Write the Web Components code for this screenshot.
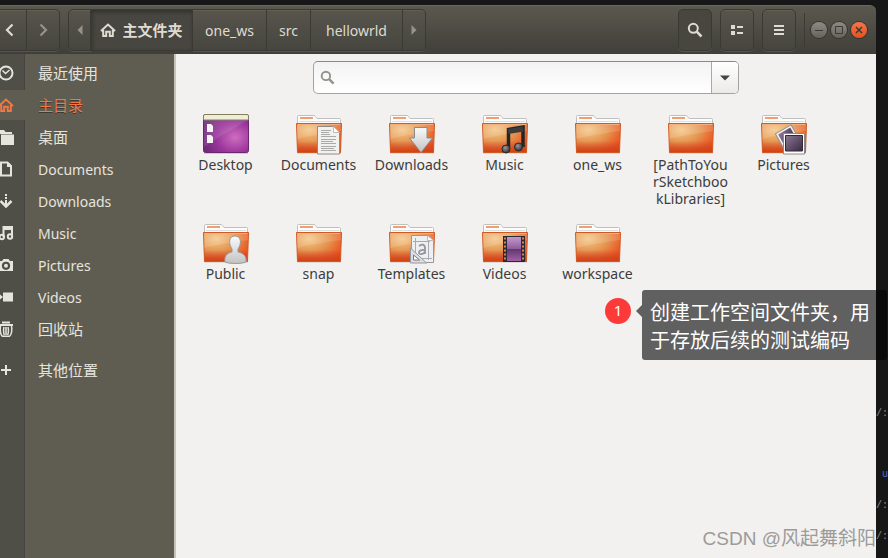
<!DOCTYPE html>
<html lang="zh-CN">
<head>
<meta charset="utf-8">
<title>主文件夹</title>
<style>
body{margin:0;font:14px/17px "Noto Sans","Noto Sans CJK SC",sans-serif}
</style>
</head>
<body>
<desk-top></desk-top>
<script>
const define = (name, html) => {
  const t = document.createElement('template');
  t.innerHTML = html;
  customElements.define(name, class extends HTMLElement {
    constructor() {
      super();
      this.attachShadow({mode: 'open'}).append(t.content.cloneNode(true));
    }
  });
};

/* Symbolic 16px icons */
const GLYPHS = {
  back: '<path d="M10.5 2.5 5 8l5.500 5.500" fill="none" stroke="currentColor" stroke-width="2.200"/>',
  next: '<path d="M5.500 2.500 11 8l-5.500 5.500" fill="none" stroke="currentColor" stroke-width="2.200"/>',
  left: '<path d="M10.500 3v10L5.500 8z" fill="currentColor"/>',
  right: '<path d="M5.500 3v10l5-5z" fill="currentColor"/>',
  home: '<path d="M1 9 8 2.500 15 9M3.200 8v6h3V9.700h3.600V14h3V8" fill="none" stroke="currentColor" stroke-width="2"/>',
  search: '<circle cx="6.300" cy="6.300" r="4.500" fill="none" stroke="currentColor" stroke-width="2"/><path d="m9.700 9.700 4.800 4.800" stroke="currentColor" stroke-width="2.500"/>',
  list: '<path d="M2 3h4v4H2zM2 9h4v4H2zM8 4h6v2H8zM8 10h6v2H8z" fill="currentColor"/>',
  menu: '<path d="M3 3h10v2H3zM3 7h10v2H3zM3 11h10v2H3z" fill="currentColor"/>',
  clock: '<circle cx="8" cy="8" r="6.500" fill="none" stroke="currentColor" stroke-width="2"/><path d="m4.500 5.500 3 3 4-3.500" fill="none" stroke="currentColor" stroke-width="1.500"/>',
  folder: '<path d="M0 1h6l1.500 2H14v2H0z" fill="currentColor"/><path d="M3 5.500h13V16H3z" fill="currentColor"/>',
  doc: '<path d="M3 1.500h6.500L13 5v9.500H3z" fill="none" stroke="currentColor" stroke-width="2"/><path d="M9 1v5h5z" fill="currentColor"/>',
  download: '<path d="M7 1h2v2H7zM7 4h2v2H7zM7 7h2v6H7z" fill="currentColor"/><path d="M2.500 8 8 13.500 13.500 8" fill="none" stroke="currentColor" stroke-width="2.500"/>',
  music: '<path d="M5.500 12V2h8.500v9" fill="none" stroke="currentColor" stroke-width="2"/><path d="M5.500 4H14" stroke="currentColor" stroke-width="2"/><circle cx="3.800" cy="12" r="2.200" fill="none" stroke="currentColor" stroke-width="2"/><circle cx="12" cy="11.500" r="2.200" fill="none" stroke="currentColor" stroke-width="2"/>',
  camera: '<path fill-rule="evenodd" d="M1 4h3l1.500-2h5L12 4h3v10H1zm7 .700a4.100 4.100 0 1 0 0 8.200 4.100 4.100 0 0 0 0-8.200" fill="currentColor"/><circle cx="8" cy="8.800" r="2" fill="currentColor"/>',
  video: '<path d="M5 3.500h10v9H5zM0 4l5 4-5 4z" fill="currentColor"/>',
  trash: '<path d="M4 1.500h8M1 4h14" fill="none" stroke="currentColor" stroke-width="2"/><path d="M2.500 5c-.800 5 .300 9.500 2 10.200h7c1.700-.700 2.800-5.200 2-10.200M6 6c-.700 3-.400 6 .300 8M8 6v8M10 6c.700 3 .400 6-.300 8" fill="none" stroke="currentColor" stroke-width="1.500"/>',
  plus: '<path d="M8 3v10M3 8h10" stroke="currentColor" stroke-width="2"/>'
};
customElements.define('sym-icon', class extends HTMLElement {
  constructor() { super(); this.attachShadow({mode: 'open'}); }
  connectedCallback() {
    this.shadowRoot.innerHTML = `<style>:host{display:block;width:16px;height:16px;flex:none}svg{display:block;width:100%;height:100%}</style>
    <svg viewBox="0 0 16 16" aria-hidden="true">${GLYPHS[this.getAttribute('name')]}</svg>`;
  }
});

/* Full-colour 48x42 file icons: a folder with an emblem over it */
const DEFS = `<defs>
<radialGradient id="o" cx=".28" cy=".22" r=".95"><stop offset="0" stop-color="#f4c88a"/><stop offset=".45" stop-color="#e59650"/><stop offset=".85" stop-color="#ea5420"/><stop offset="1" stop-color="#e24a1a"/></radialGradient>
<linearGradient id="ol" x2="0" y2="1"><stop offset=".6" stop-color="#c43" stop-opacity="0"/><stop offset="1" stop-color="#d2420f"/></linearGradient>
<linearGradient id="g" x2="0" y2="1"><stop stop-color="#fbfbfb"/><stop offset="1" stop-color="#c2c2c2"/></linearGradient>
<linearGradient id="p" x2="1" y2="1"><stop stop-color="#8e7896"/><stop offset="1" stop-color="#382a40"/></linearGradient>
<radialGradient id="d" cx=".7" cy=".6" r=".75"><stop stop-color="#cf6dbe"/><stop offset=".55" stop-color="#9a359c"/><stop offset="1" stop-color="#6b2a77"/></radialGradient>
<linearGradient id="v" x2="0" y2="1"><stop stop-color="#c09acb"/><stop offset=".5" stop-color="#8e5c9c"/><stop offset=".52" stop-color="#63386f"/><stop offset="1" stop-color="#a25fa8"/></linearGradient>
<radialGradient id="n" cx=".4" cy=".35" r=".6"><stop stop-color="#999"/><stop offset="1" stop-color="#3a3a3a"/></radialGradient></defs>`;
const FOLDER = `<path d="M2 39.500h44v1H2z" fill="#c9c5c2"/>
<path d="M2.500 11V3.500q0-1 1-1h15.500q1 0 1.500 1l1.500 2h22.500q1 0 1 1V11z" fill="#fcfcfc" stroke="#bfc0c0"/>
<path d="M5 4h13v2H5z" fill="#f0a070"/><path d="M4 8.500h40" stroke="#dedede"/>
<path d="M1.500 10.500h45l-1 29h-43z" fill="url(#o)"/><path d="M1.500 10.500h45l-1 29h-43z" fill="url(#ol)" stroke="#cf5a24"/>
<path d="M2.500 11.500h43" stroke="#f3b180"/><path d="M2 12h44v6Q22 21 2 26z" fill="#fff" opacity=".14"/>`;
const EMBLEMS = {
  folder: '',
  documents: `<path d="M22.500 13.500h16l6 6v21.500h-22z" fill="#f1f1f0" stroke="#8c8c8c"/><path d="M38.500 13.500v6h6z" fill="#fff" stroke="#bbb"/>
    <path d="M26 17.500h10M26 19.500h8M26 21.500h9M26 23.500h15M26 26.500h15M26 28.500h12M26 30.500h15M26 33.500h15M26 35.500h13M26 37.500h15" stroke="#aaa"/>`,
  downloads: '<path d="M26.500 14.500h12.500v10.500h5.500L33 39.500 21.500 25h5z" fill="url(#g)" stroke="#8b8b8b"/>',
  music: `<path d="M27.500 35V16.500l14.500-2.500V34" fill="none" stroke="#252525" stroke-width="3.500"/><path d="M27 18.500 42 16" stroke="#3c3c3c" stroke-width="5"/>
    <circle cx="25" cy="36" r="4" fill="url(#n)" stroke="#2a2a2a"/><circle cx="37.500" cy="34" r="4" fill="url(#n)" stroke="#2a2a2a"/>`,
  pictures: `<g transform="rotate(-30 27 24)"><path d="M18.500 15.500h18v18h-18z" fill="#f6f6f6" stroke="#909090"/><path d="M20.500 17.500h14v13h-14z" fill="url(#p)"/></g>
    <path d="M23.500 20.500h21v20.500h-21z" fill="#fff" stroke="#8a8a8a"/><path d="M25.500 22.500h17v15.500h-17z" fill="url(#p)" stroke="#332838"/>`,
  public: `<path d="M23 40c-1-6 2-9 7-10v-3c-4-6-3-13 3-13s7 7 3 13v3c5 1 9 4 8 10-4 2-17 2-21 0z" fill="url(#g)" stroke="#999"/>`,
  templates: `<path d="M23.500 13.500h16l6 5v22h-22z" fill="#eeeff1" stroke="#95989d"/><path d="M39.500 13.500v5h6z" fill="#fff" stroke="#bbb"/>
    <path d="M25 19.500h17M40.500 20v18M27.500 16v22M29 36.500h15" stroke="#a8abb0"/>
    <path d="M31 24q5-3 6 1v7m0-4c-7-1-8 5-3 4q3-1 3-3" fill="none" stroke="#9496a0" stroke-width="1.800"/>
    <path d="M22.500 26v15h16z" fill="#dcdde2" stroke="#96989f"/><path d="M25.500 33v5h6z" fill="#fff" stroke="#777b84"/>`,
  videos: `<path d="M22 14h22v26H22z" fill="#2e2930"/><path d="M26 15h14v24H26z" fill="url(#v)"/>
    <path d="M24 15.500v24M42 15.500v24" stroke="#d7835a" stroke-width="2" stroke-dasharray="2 2"/>`
};
const DESKTOP = `<path d="M2 39.500h44v1.500H2z" fill="#ccc"/><rect x="1.500" y="1.500" width="45" height="38" rx="2" fill="url(#d)" stroke="#6d256f"/>
<path d="M2 7 46 7 14 26 2 34z" fill="#fff" opacity=".1"/><path d="M1.500 7V3q0-1.500 1.500-1.500h42q1.500 0 1.500 1.500v4z" fill="#eeeed8" stroke="#83805c"/>
<path d="M5 11h4l2 2v6H5zM5 22h4l2 2v6H5z" fill="#f7f2f6"/>`;
customElements.define('file-item', class extends HTMLElement {
  constructor() { super(); this.attachShadow({mode: 'open'}); }
  connectedCallback() {
    const k = this.getAttribute('kind') || 'folder';
    this.shadowRoot.innerHTML = `<style>:host{display:flex;flex-direction:column;align-items:center;gap:1px;color:#3c3c3c}
    svg{display:block;width:48px;height:42px}span{max-width:80px;text-align:center;overflow-wrap:anywhere}</style>
    <svg viewBox="0 0 48 42" aria-hidden="true">${DEFS}${k === 'desktop' ? DESKTOP : FOLDER + EMBLEMS[k]}</svg><span><slot></slot></span>`;
  }
});

define('tool-button', `<style>
:host{display:flex;flex:none;box-sizing:border-box;height:42px;color:#dfdbd2}
button{flex:1;min-width:0;display:flex;align-items:center;justify-content:center;gap:6px;margin:0;padding:0;border:1px solid #3a3934;border-radius:5px;background:linear-gradient(#57554c,#46453f);box-shadow:inset 0 1px #625f54,0 1px #57554b;color:inherit;font:inherit;white-space:nowrap}
:host([seg]) button{border-radius:0;border-left-width:0}
:host([seg=first]) button{border-radius:5px 0 0 5px;border-left-width:1px}
:host([seg=last]) button{border-radius:0 5px 5px 0}
:host([dim]){color:#96938a}
:host([active]) button{background:#474640;box-shadow:inset 1px 2px 4px #32312d;font-size:15px;font-weight:700}
:host([pressed]) button{background:#47463f;box-shadow:0 1px #57554b}
:host([small]){width:23px}
:host([square]){width:34px}
</style><button type="button"><slot></slot></button>`);

define('window-controls', `<style>
:host{display:flex;align-items:center;gap:4px;padding-left:6px;border-left:1px solid #3b3a35;height:34px}
button{width:16px;height:16px;padding:0;border:0;border-radius:8px;background:linear-gradient(#8d8b84,#65635c);box-shadow:0 0 0 1px #35342f;color:#3b3a35}
.x{background:linear-gradient(#f4754c,#e4531f)}svg{display:block}path{fill:none;stroke:currentColor}
</style>
<button type="button" aria-label="最小化"><svg viewBox="0 0 16 16"><path d="M4 8.500h8"/></svg></button>
<button type="button" aria-label="最大化"><svg viewBox="0 0 16 16"><path d="M4.500 4.500h7v7h-7z"/></svg></button>
<button type="button" class="x" aria-label="关闭"><svg viewBox="0 0 16 16"><path d="m5 5 6 6m0-6-6 6" stroke-width="1.500"/></svg></button>`);

define('header-bar', `<style>
:host{display:flex;align-items:center;height:49px;box-sizing:border-box;padding-right:9px;border-top:1px solid #6a675b;border-radius:0 6px 0 0;background:linear-gradient(#5b594e,#3f3e39)}
nav,.tools{display:flex}nav{margin-left:8px}.tools{gap:8px;margin-left:auto;margin-right:8px}
.home{width:102px}.one{width:74px}.src{width:44px}.hello{width:92px}.back{width:27px}.fwd{width:33px}
.back sym-icon{margin-right:6px}
</style>
<tool-button class="back" seg><sym-icon name="back"></sym-icon></tool-button><tool-button class="fwd" seg="last" dim><sym-icon name="next"></sym-icon></tool-button>
<nav aria-label="路径">
<tool-button seg="first" dim small><sym-icon name="left"></sym-icon></tool-button>
<tool-button class="home" seg active><sym-icon name="home"></sym-icon>主文件夹</tool-button>
<tool-button class="one" seg>one_ws</tool-button>
<tool-button class="src" seg>src</tool-button>
<tool-button class="hello" seg>hellowrld</tool-button>
<tool-button seg="last" dim small><sym-icon name="right"></sym-icon></tool-button>
</nav>
<div class="tools">
<tool-button square pressed><sym-icon name="search"></sym-icon></tool-button>
<tool-button square><sym-icon name="list"></sym-icon></tool-button>
<tool-button square><sym-icon name="menu"></sym-icon></tool-button>
</div>
<window-controls></window-controls>`);

define('side-item', `<style>
:host{display:block;height:32px}
a{display:flex;align-items:center;height:30px;color:#e6e4de;text-decoration:none}
.i{width:24px;height:30px;display:flex;align-items:center;overflow:hidden;margin-right:14px;flex:none}
::slotted(sym-icon){margin-left:-2px}
:host([selected]) a{color:#f07746;background:#5f5d51;text-shadow:0 1px #3c3b36}
:host([zh]) a{font-size:15px}
:host([apart]){margin-top:9px}
</style><a href="#"><span class="i"><slot name="icon"></slot></span><slot></slot></a>`);

define('side-bar', `<style>
:host{display:block;width:176px;flex:none;padding-top:4px;box-sizing:border-box;border-right:2px solid #c5c3be;background:linear-gradient(90deg,#4f4e47 24px,#454440 24px,#454440 25px,#5f5d51 25px)}
</style>
<side-item zh><sym-icon slot="icon" name="clock"></sym-icon>最近使用</side-item>
<side-item zh selected><sym-icon slot="icon" name="home"></sym-icon>主目录</side-item>
<side-item zh><sym-icon slot="icon" name="folder"></sym-icon>桌面</side-item>
<side-item><sym-icon slot="icon" name="doc"></sym-icon>Documents</side-item>
<side-item><sym-icon slot="icon" name="download"></sym-icon>Downloads</side-item>
<side-item><sym-icon slot="icon" name="music"></sym-icon>Music</side-item>
<side-item><sym-icon slot="icon" name="camera"></sym-icon>Pictures</side-item>
<side-item><sym-icon slot="icon" name="video"></sym-icon>Videos</side-item>
<side-item zh><sym-icon slot="icon" name="trash"></sym-icon>回收站</side-item>
<side-item zh apart><sym-icon slot="icon" name="plus"></sym-icon>其他位置</side-item>`);

define('search-box', `<style>
:host{display:flex;width:426px;max-width:90%;height:33px;box-sizing:border-box;border:1px solid #a5a39f;border-top-color:#8b8985;border-radius:5px;background:linear-gradient(#f3f3f3,#fff);overflow:hidden;color:#93918b}
label{display:flex;align-items:center;flex:1;padding-left:6px;gap:6px}
sym-icon{width:15px;height:15px}
input{flex:1;min-width:0;border:0;background:none;outline:0;font:inherit;color:#3c3c3c}
button{width:27px;padding:0;border:0;border-left:1px solid #aaa8a4;background:linear-gradient(#fff,#ebeae8)}
svg{display:block;width:10px;height:6px;margin:auto}
</style><label><sym-icon name="search"></sym-icon><input type="text" aria-label="搜索"></label>
<button type="button" aria-label="筛选"><svg viewBox="0 0 10 6"><path d="M0 .500h10L5 5.500z" fill="#444"/></svg></button>`);

define('file-view', `<style>
:host{display:flex;flex-direction:column;align-items:center;flex:1;padding-top:7px;background:#f2f1ef}
.grid{align-self:stretch;display:grid;grid-template-columns:repeat(auto-fill,93px);row-gap:15px;padding:19px 0 0 3px}
</style>
<search-box></search-box>
<div class="grid">
<file-item kind="desktop">Desktop</file-item>
<file-item kind="documents">Documents</file-item>
<file-item kind="downloads">Downloads</file-item>
<file-item kind="music">Music</file-item>
<file-item>one_ws</file-item>
<file-item>[PathToYourSketchbookLibraries]</file-item>
<file-item kind="pictures">Pictures</file-item>
<file-item kind="public">Public</file-item>
<file-item>snap</file-item>
<file-item kind="templates">Templates</file-item>
<file-item kind="videos">Videos</file-item>
<file-item>workspace</file-item>
</div>`);

define('file-window', `<style>
:host{display:flex;flex-direction:column;flex:1;min-width:0}
main{display:flex;flex:1}
</style><header-bar></header-bar><main><side-bar></side-bar><file-view></file-view></main>`);

define('step-note', `<style>
:host{position:absolute;left:605px;top:290px;display:flex;align-items:flex-start;color:#fff}
b{width:26px;height:26px;margin-top:8px;border-radius:50%;background:#fc3a3a;font:15px/24px "Noto Sans",sans-serif;text-align:center}
i{margin:15px 0 0 5px;border:6px solid transparent;border-left:0;border-right-color:rgba(0,0,0,.6)}
p{margin:0;width:229px;padding:8px 8px 6px;border-radius:3px;background:rgba(0,0,0,.6);font:20px/28px "Noto Sans CJK SC",sans-serif}
</style><b>1</b><i></i><p><slot></slot></p>`);

define('water-mark', `<style>
:host{position:absolute;right:12px;bottom:6px;color:#9c9b9a;font:19px/26px "Liberation Sans","Noto Sans CJK SC",sans-serif;white-space:nowrap}
</style><slot></slot>`);

/* Sliver of the terminal that shows behind the window */
define('term-edge', `<style>
:host{width:12px;flex:none;display:flex;flex-direction:column;justify-content:flex-end;gap:13px;padding-bottom:12px;overflow:hidden;color:#8b8b8b;font:10px/18px "Liberation Mono",monospace;white-space:pre}
.u{color:#4a6fd0;text-align:right}.g{margin-top:30px}
</style><span>/:</span><span class="u g">u</span><span>/:</span><span>/:</span>`);

define('desk-top', `<style>
:host{position:relative;display:flex;min-height:100vh;box-sizing:border-box;padding-top:5px;background:#171717;overflow:hidden}
</style><file-window></file-window><term-edge aria-hidden="true"></term-edge>
<step-note>创建工作空间文件夹，用于存放后续的测试编码</step-note>
<water-mark>CSDN @风起舞斜阳</water-mark>`);
</script>
</body>
</html>
